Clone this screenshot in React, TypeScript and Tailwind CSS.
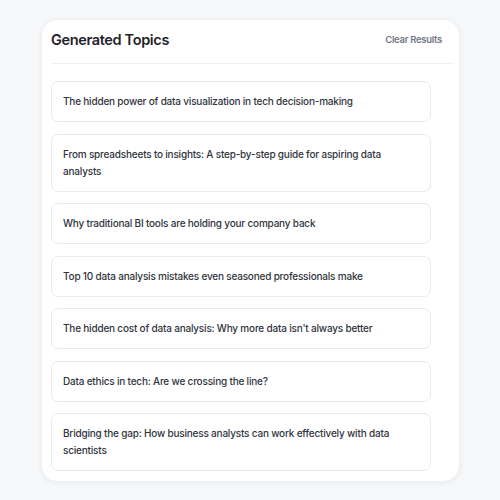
import React from "react";

const topics = [
  "The hidden power of data visualization in tech decision-making",
  "From spreadsheets to insights: A step-by-step guide for aspiring data analysts",
  "Why traditional BI tools are holding your company back",
  "Top 10 data analysis mistakes even seasoned professionals make",
  "The hidden cost of data analysis: Why more data isn't always better",
  "Data ethics in tech: Are we crossing the line?",
  "Bridging the gap: How business analysts can work effectively with data scientists",
];

export default function App() {
  return (
    <div
      className="w-[500px] h-[500px] bg-[#f7f8fa] pt-[19px] pl-[41px]"
      style={{ fontFamily: "Inter, 'Noto Sans', sans-serif" }}
    >
      <div className="w-[419px] rounded-[16px] bg-white shadow-[0_1px_6px_rgba(0,0,0,0.06)] border border-[#eef0f3] p-[9px] pb-[10px]">
        <div className="flex items-center justify-between border-b border-[#f0f1f4] pt-[1px] pb-[13px] pr-[12px] mr-[-4px]">
          <h2 className="text-[14.5px] leading-[20px] font-semibold text-[#1f2328] tracking-[-0.35px]">
            Generated Topics
          </h2>
          <button className="text-[9.5px] leading-[14px] font-semibold text-[#747a86] tracking-[-0.3px]">
            Clear Results
          </button>
        </div>
        <div className="mt-[17px] flex flex-col gap-[11.5px] w-[380px]">
          {topics.map((t) => (
            <div
              key={t}
              className="rounded-[7px] border border-[#e8eaee] bg-white pl-[11px] py-[11px] pr-[20px] text-[10px] leading-[17px] font-medium text-[#30353d] tracking-[-0.2px]"
            >
              {t}
            </div>
          ))}
        </div>
      </div>
    </div>
  );
}
